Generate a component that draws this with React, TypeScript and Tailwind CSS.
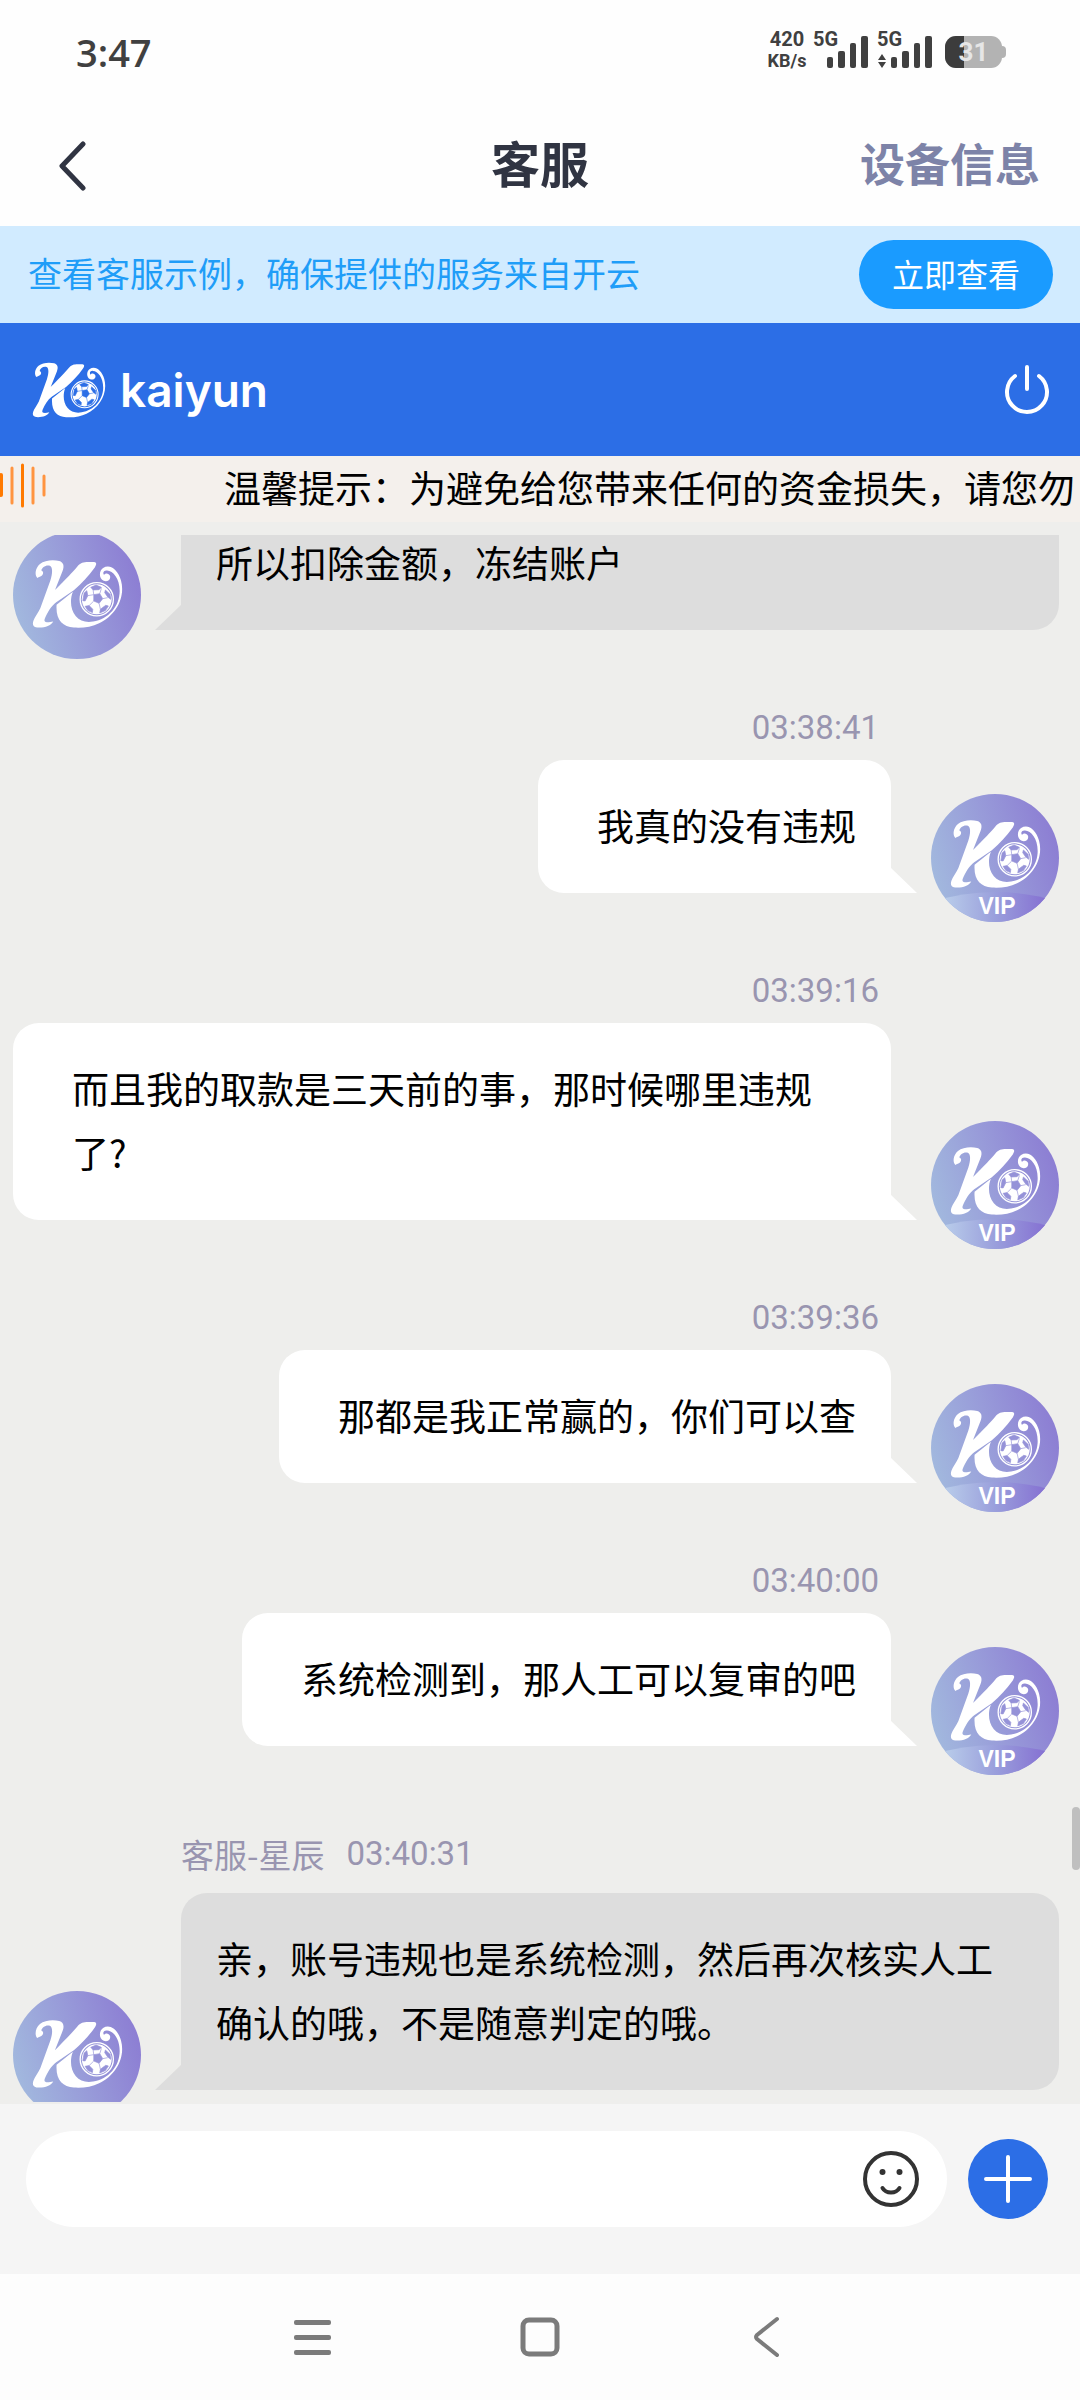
import { useState } from "react";

type Message = {
  from: "agent" | "user";
  name?: string;
  time?: string;
  text: string;
};

const messages: Message[] = [
  { from: "agent", text: "所以扣除金额，冻结账户" },
  { from: "user", time: "03:38:41", text: "我真的没有违规" },
  {
    from: "user",
    time: "03:39:16",
    text: "而且我的取款是三天前的事，那时候哪里违规了?",
  },
  { from: "user", time: "03:39:36", text: "那都是我正常赢的，你们可以查" },
  { from: "user", time: "03:40:00", text: "系统检测到，那人工可以复审的吧" },
  {
    from: "agent",
    name: "客服-星辰",
    time: "03:40:31",
    text: "亲，账号违规也是系统检测，然后再次核实人工确认的哦，不是随意判定的哦。",
  },
];

function Monogram({ seam }: { seam: string }) {
  return (
    <g fill="#fff">
      {/* stem with the curl at the top left */}
      <path d="M164 173C155 163 158 143 172 131C186 119 213 117 230 122C243 126 246 137 240 152L217 210C222 204 262 165 284 139C294 127 303 125 317 125L335 125C343 126 343 132 337 141C318 168 298 188 274 210L221 246C206 257 195 276 187 294C182 306 190 309 212 304C204 317 190 322 170 322C153 322 148 315 152 302C156 290 166 279 173 264L203 181C211 158 210 140 202 136C190 132 178 141 176 150C182 152 184 160 178 165C174 169 169 168 164 173Z" />
      {/* leg that sweeps under the ball and curls back */}
      <path d="M222 253L271 214C262 237 263 268 280 288C292 302 310 308 332 304C378 297 412 258 412 212C412 174 392 151 374 150C363 149 360 158 365 164C368 157 380 158 383 167C386 179 373 185 364 181C349 175 349 152 362 143C384 129 407 150 416 180C430 232 400 286 350 309C328 320 300 324 274 322C240 319 219 300 222 253Z" />
      <circle cx="343" cy="237" r="50" fill="none" stroke="#fff" strokeWidth="4" />
      <circle cx="343" cy="237" r="45" />
      <g fill={seam} stroke={seam} strokeWidth="2" strokeLinejoin="round">
        <path d="M334 223L352 220L361 235L350 249L334 242Z" />
        <path d="M325 201L341 194L357 201L350 208L332 209Z" />
        <path d="M369 209L383 222L385 237L376 230L367 217Z" />
        <path d="M305 218L313 211L316 226L308 242L301 241Z" />
        <path d="M308 258L320 256L331 267L330 277L316 271Z" />
        <path d="M354 267L370 255L378 257L369 271L352 278Z" />
        <path
          d="M334 223L332 209M352 220L357 204M361 235L376 232M350 249L354 267M334 242L320 256M316 226L334 223"
          fill="none"
        />
      </g>
    </g>
  );
}

function Avatar({ vip }: { vip?: boolean }) {
  return (
    <svg
      viewBox="0 0 128 128"
      className="h-32 w-32 shrink-0 rounded-full"
      role="img"
      aria-label={vip ? "VIP" : "客服"}
    >
      <defs>
        <linearGradient id="disc" x1="0" y1="0.65" x2="1" y2="0.35">
          <stop offset="0" stopColor="#a2b9de" />
          <stop offset="0.5" stopColor="#989bd9" />
          <stop offset="1" stopColor="#8c7dd3" />
        </linearGradient>
        <linearGradient id="band" x1="0.1" y1="0" x2="0.9" y2="0">
          <stop offset="0" stopColor="#b9cdea" />
          <stop offset="0.5" stopColor="#9a9fdc" />
          <stop offset="1" stopColor="#8570d2" />
        </linearGradient>
      </defs>
      <rect width="128" height="128" fill="url(#disc)" />
      <svg
        x="19"
        y={vip ? 25 : 28}
        width="91"
        height="70"
        viewBox="148 117 274 208"
      >
        <Monogram seam="#9592d8" />
      </svg>
      {vip && (
        <>
          <path d="M0 108Q64 88 128 108V128H0Z" fill="url(#band)" />
          <text
            x="66"
            y="120"
            textAnchor="middle"
            fill="#fff"
            className="font-['Liberation_Sans',sans-serif] text-[23px] font-bold"
          >
            VIP
          </text>
        </>
      )}
    </svg>
  );
}

function SignalBars() {
  return (
    <svg viewBox="0 0 41 32" className="h-8 w-[41px]" fill="#404040">
      <rect x="0" y="21" width="6" height="11" rx="2" />
      <rect x="11" y="15" width="7" height="17" rx="2" />
      <rect x="23" y="7" width="6" height="25" rx="2" />
      <rect x="34" y="0" width="7" height="32" rx="2" />
    </svg>
  );
}

function StatusBar() {
  return (
    <div className="flex h-[106px] shrink-0 items-center justify-between pb-1.5 pl-[76px] pr-[74px] text-[#404040]">
      <span className="pt-1 font-['Open_Sans',sans-serif] text-[38px] font-semibold">
        3:47
      </span>
      <div className="flex h-9 items-end font-['Roboto',sans-serif] text-[20px] font-bold leading-[14px]">
        <div className="flex w-[42px] flex-col items-center gap-2">
          <span>420</span>
          <span className="text-[18px] leading-[14px]">KB/s</span>
        </div>
        <span className="ml-[5px] w-[25px] self-start">5G</span>
        <div className="-ml-[11px]">
          <SignalBars />
        </div>
        <div className="ml-[9px] flex w-[25px] flex-col items-start gap-2">
          <span>5G</span>
          <svg viewBox="0 0 10 14" className="h-3.5 w-2.5" fill="#404040">
            <path d="M5 0L9 6H1ZM5 14L9 8H1Z" />
          </svg>
        </div>
        <div className="-ml-[11px]">
          <SignalBars />
        </div>
        <div className="ml-[13px] flex items-center">
          <div className="relative flex h-8 w-[57px] items-center justify-center rounded-[11px] bg-[#b3b3b3]">
            <div className="absolute inset-y-0 left-0 w-[19px] rounded-l-[11px] bg-[#3c3c3c]" />
            <span className="relative text-[26px] leading-8 text-[#e6e6e6]">
              31
            </span>
          </div>
          <div className="h-3 w-1 rounded-r-full bg-[#b3b3b3]" />
        </div>
      </div>
    </div>
  );
}

function TitleBar() {
  return (
    <header className="grid h-[120px] shrink-0 grid-cols-[1fr_auto_1fr] items-center px-10">
      <button
        type="button"
        aria-label="返回"
        className="justify-self-start pl-[17px]"
      >
        <svg
          viewBox="0 0 32 50"
          className="h-[50px] w-8"
          fill="none"
          stroke="#303442"
          strokeWidth="5"
          strokeLinecap="round"
          strokeLinejoin="round"
        >
          <path d="M26 3L5 25L26 47" />
        </svg>
      </button>
      <h1 className="pb-2 text-[49px] font-bold text-[#303442]">客服</h1>
      <button
        type="button"
        className="justify-self-end whitespace-nowrap pb-1.5 text-[45px] font-bold text-[#7d83a8]"
      >
        设备信息
      </button>
    </header>
  );
}

function NoticeTicker() {
  return (
    <div className="flex h-[66px] shrink-0 items-start overflow-hidden bg-[#f4f0ec]">
      <svg
        viewBox="0 0 48 60"
        className="h-[60px] w-12 shrink-0"
        stroke="#ff9440"
        strokeWidth="3"
        strokeLinecap="round"
      >
        <path d="M1 19V39" stroke="#ff7a00" strokeWidth="4" />
        <path d="M12 12V47M33 12V47M44 20V39" />
        <path d="M22.500 9V50" stroke="#ff7a00" />
      </svg>
      <p className="ml-44 whitespace-nowrap text-[37px] leading-[62px] text-black">
        温馨提示：为避免给您带来任何的资金损失，请您勿
      </p>
    </div>
  );
}

function Bubble({ message }: { message: Message }) {
  if (message.from === "agent") {
    return (
      <article className="flex items-end pl-[13px] pr-[21px]">
        <Avatar />
        <div className="ml-10 min-w-0 flex-1">
          {message.time && (
            <p className="mb-[17px] mt-[57px] flex gap-[22px] text-[33px] leading-[44px] text-[#9995b0]">
              <span>{message.name}</span>
              <time className="font-['Roboto','Noto_Sans_CJK_SC',sans-serif]">
                {message.time}
              </time>
            </p>
          )}
          <div className="relative mb-[29px] rounded-[26px] rounded-bl-none bg-[#ddd] px-[35px] pb-9 pt-[33px]">
            <p className="text-[37px] leading-[64px]">{message.text}</p>
            <span className="absolute -left-[26px] bottom-0 h-[26px] w-[27px] bg-[#ddd] [clip-path:polygon(0_100%,100%_0,100%_100%)]" />
          </div>
        </div>
      </article>
    );
  }

  return (
    <article className="flex items-end justify-end pl-[13px] pr-[21px]">
      <div className="flex min-w-0 flex-col items-end">
        <time className="mb-2.5 mr-3 mt-[47px] font-['Roboto','Noto_Sans_CJK_SC',sans-serif] text-[33px] leading-[44px] text-[#9995b0]">
          {message.time}
        </time>
        <div className="relative mb-[29px] rounded-[26px] rounded-br-none bg-white pb-9 pl-[59px] pr-[35px] pt-[33px]">
          <p className="text-[37px] leading-[64px]">{message.text}</p>
          <span className="absolute -right-[26px] bottom-0 h-[26px] w-[27px] bg-white [clip-path:polygon(0_0,100%_100%,0_100%)]" />
        </div>
      </div>
      <div className="ml-10 shrink-0">
        <Avatar vip />
      </div>
    </article>
  );
}

function Composer() {
  const [draft, setDraft] = useState("");

  return (
    <form
      className="flex h-[170px] shrink-0 items-start bg-[#f5f5f5] px-[26px] pt-[27px]"
      onSubmit={(e) => e.preventDefault()}
    >
      <div className="flex h-24 flex-1 items-center rounded-full bg-white pl-10 pr-7">
        <input
          type="text"
          aria-label="消息"
          value={draft}
          onChange={(e) => setDraft(e.target.value)}
          className="min-w-0 flex-1 bg-transparent text-[37px] outline-none"
        />
        <button type="button" aria-label="表情">
          <svg
            viewBox="0 0 56 56"
            className="h-14 w-14"
            fill="none"
            stroke="#333"
            strokeWidth="4"
            strokeLinecap="round"
          >
            <circle cx="28" cy="28" r="26" />
            <path d="M19.500 37C23 43 33 43 36.500 37" />
            <ellipse cx="19.500" cy="21" rx="3" ry="3" fill="#333" stroke="none" />
            <ellipse cx="36.500" cy="21" rx="3" ry="3" fill="#333" stroke="none" />
          </svg>
        </button>
      </div>
      <button
        type="button"
        aria-label="更多"
        className="ml-[21px] mr-1.5 mt-2 flex h-20 w-20 items-center justify-center rounded-full bg-[#2c6ee6]"
      >
        <svg
          viewBox="0 0 48 48"
          className="h-12 w-12"
          stroke="#fff"
          strokeWidth="4"
          strokeLinecap="round"
        >
          <path d="M24 2V46M2 24H46" />
        </svg>
      </button>
    </form>
  );
}

function SystemNav() {
  return (
    <nav className="flex h-[126px] shrink-0 items-center justify-center gap-[188px] bg-[#fdfdfd]">
      <button type="button" aria-label="菜单">
        <svg viewBox="0 0 40 42" className="h-[42px] w-10" fill="#7b7b7b">
          <rect x="2" y="4" width="37" height="5" rx="2" />
          <rect x="2" y="19" width="37" height="5" rx="2" />
          <rect x="2" y="34" width="37" height="5" rx="2" />
        </svg>
      </button>
      <button type="button" aria-label="主页">
        <svg viewBox="0 0 40 42" className="h-[42px] w-10" fill="none">
          <rect
            x="3"
            y="4"
            width="34"
            height="34"
            rx="6"
            stroke="#7b7b7b"
            strokeWidth="5"
          />
        </svg>
      </button>
      <button type="button" aria-label="后退">
        <svg
          viewBox="0 0 40 42"
          className="h-[42px] w-10"
          fill="none"
          stroke="#7b7b7b"
          strokeWidth="4"
          strokeLinecap="round"
          strokeLinejoin="round"
        >
          <path d="M29 3L9 19Q7 21 9 23L29 39" />
        </svg>
      </button>
    </nav>
  );
}

export default function App() {
  return (
    <div className="flex h-screen flex-col overflow-hidden bg-[#fefefe] font-['Noto_Sans_CJK_SC',sans-serif] text-black">
      <StatusBar />
      <TitleBar />

      <div className="flex h-[97px] shrink-0 items-center justify-between bg-[#d1ebff] pl-7 pr-[27px]">
        <p className="pb-1 text-[34px] text-[#1f9df8]">
          查看客服示例，确保提供的服务来自开云
        </p>
        <button
          type="button"
          className="flex h-[69px] items-center rounded-full bg-[#1a9bff] px-[33px] pb-1 text-[32px] text-white"
        >
          立即查看
        </button>
      </div>

      <div className="flex h-[133px] shrink-0 items-center justify-between bg-[#2c6ee6] pl-8 pr-[29px]">
        <div className="flex items-center gap-3.5">
          <svg viewBox="148 117 274 208" className="h-14 w-[74px]">
            <Monogram seam="#2c6ee6" />
          </svg>
          <span className="font-['Inter',sans-serif] text-[46px] font-semibold leading-[56px] text-white">
            kaiyun
          </span>
        </div>
        <button type="button" aria-label="退出">
          <svg
            viewBox="0 0 48 50"
            className="h-[50px] w-12"
            fill="none"
            stroke="#fff"
            strokeWidth="4"
            strokeLinecap="round"
          >
            <path d="M24 2V24M12 11A20 20 0 1 0 36 11" />
          </svg>
        </button>
      </div>

      <NoticeTicker />

      <main className="relative flex min-h-0 flex-1 flex-col bg-[#eeeeec] pb-0.5 pt-[13px]">
        <div className="min-h-0 flex-1 overflow-hidden">
          {/* scrolled part of the thread */}
          <div className="-mt-[38px]">
            {messages.map((message) => (
              <Bubble key={message.text} message={message} />
            ))}
          </div>
        </div>
        <div className="absolute bottom-[234px] right-0 h-[63px] w-2 rounded-full bg-[#bfbfbf]" />
      </main>

      <Composer />
      <SystemNav />
    </div>
  );
}
